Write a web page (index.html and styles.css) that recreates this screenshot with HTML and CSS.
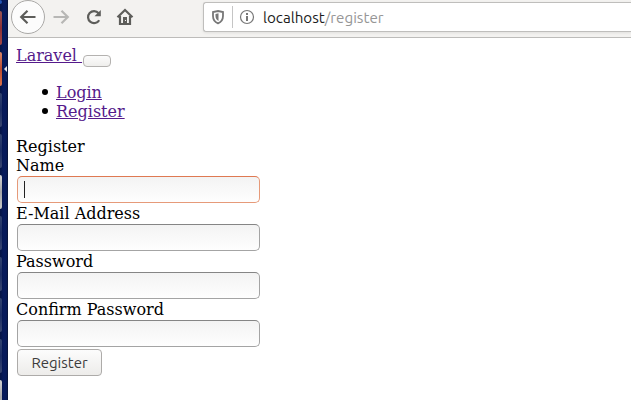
FILE: index.html
```html
<!DOCTYPE html>
<html lang="en">
<head>
<meta charset="utf-8">
<title>Laravel</title>
<link rel="stylesheet" href="styles.css">
</head>
<body>
<div class="desktop">
  <aside class="dock">
    <i class="tile blue"></i><i class="tile red"></i><i class="tile orange"></i><i class="tile"></i><i class="tile"></i><i class="tile light"></i><i class="tile"></i><i class="tile"></i><i class="tile"></i><i class="tile"></i><i class="tile light"></i>
    <span class="pointer"></span>
  </aside>
  <div class="browser">
    <header class="toolbar">
      <div class="back"><svg width="18" height="18" viewBox="0 0 18 18"><path d="M16.500 9H2.500M8.500 2.700L2.200 9l6.300 6.300"/></svg></div>
      <svg class="forward" width="18" height="18" viewBox="0 0 18 18"><path d="M1.500 9h13.500M9.500 2.700L15.800 9l-6.300 6.300"/></svg>
      <svg class="reload" width="18" height="18" viewBox="0 0 18 18"><path d="M14.200 12.200A6 6 0 1 1 13.600 5.200"/><path class="solid" d="M15.800 2v6.300H9.500z"/></svg>
      <svg class="home" width="18" height="18" viewBox="0 0 18 18"><path d="M1.500 9.300L9 2l7.500 7.300M4 8v8h10V8"/><path class="solid" d="M7 9h4v6H7z"/><path class="knob" d="M9 12h1v1H9z"/></svg>
      <div class="address">
        <svg class="shield" width="14" height="16" viewBox="0 0 14 16"><path d="M7 2L12 3v4c0 3.500-1.800 6-5 7.300C3.800 13 2 10.500 2 7V3z"/><path class="solid" d="M7.500 4.300L4.500 5V7c0 2.200 1 3.900 3 5z"/></svg>
        <span class="divider"></span>
        <svg class="info" width="16" height="16" viewBox="0 0 16 16"><circle cx="8" cy="8" r="6.500"/><path class="solid" d="M7 4h2v2H7zM7 7h2v5H7z"/></svg>
        <span class="url">localhost<span class="path">/register</span></span>
      </div>
    </header>
    <main class="page">
      <nav>
        <div class="brand"><a href="#">Laravel </a><button class="toggle" type="button" aria-label="Menu"></button></div>
        <ul><li><a href="#">Login</a></li><li><a href="#">Register</a></li></ul>
      </nav>
      <div>Register</div>
      <form>
        <label for="name">Name</label>
        <div class="field focused"><input id="name" type="text"><span class="caret"></span></div>
        <label for="email">E-Mail Address</label>
        <div class="field"><input id="email" type="email"></div>
        <label for="password">Password</label>
        <div class="field"><input id="password" type="password"></div>
        <label for="confirm">Confirm Password</label>
        <div class="field"><input id="confirm" type="password"></div>
        <button class="submit" type="button">Register</button>
      </form>
    </main>
  </div>
</div>
</body>
</html>
```
FILE: styles.css
```css
* { box-sizing: border-box; }
body { margin: 0; background: #fff; color: #000; font: 16px/19px "DejaVu Serif", serif; overflow: hidden; }
.desktop { display: flex; height: 400px; }
.dock { position: relative; flex: none; width: 8px; height: 400px; overflow: hidden; display: flex; flex-direction: column; gap: 7px; background: linear-gradient(90deg, #061545, #071a5c 45%, #071a58 80%, #061030); }
.tile { flex: none; width: 2px; height: 34px; border-radius: 0 2px 2px 0; background: linear-gradient(#33446f, #1b2d64 50%, #3a4770); }
.tile.blue { height: 4px; background: #2456b5; }
.tile.red { background: linear-gradient(#9b5653, #8b3035 50%, #a34745); }
.tile.orange { background: linear-gradient(#d98668, #b94a2f 50%, #db7048); }
.tile.light { background: linear-gradient(#d4d3d2, #a6a6a8 50%, #c9c9c6); }
.pointer { position: absolute; right: 1px; top: 66px; border: 3px solid transparent; border-left: 0; border-right-color: #e4e4e8; }
.browser { flex: 1; min-width: 0; }
.toolbar { display: flex; align-items: center; height: 38px; padding-bottom: 4px; background: #f3f2f0; border-bottom: 1px solid #bdbcba; }
.toolbar svg { flex: none; fill: none; stroke: #5d5d5a; stroke-width: 2.200; }
.toolbar svg .solid { fill: #5d5d5a; stroke: none; }
.toolbar svg .knob { fill: #f3f2f0; stroke: none; }
.back { flex: none; display: flex; align-items: center; justify-content: center; width: 34px; height: 34px; margin-left: 3px; border: 1px solid #aaa9a7; border-radius: 50%; background: #fcfcfc; }
.toolbar .forward { margin-left: 7px; stroke: #b7b7b5; }
.reload { margin-left: 15px; }
.home { margin-left: 13px; }
.address { flex: 1; min-width: 0; align-self: flex-start; display: flex; align-items: center; height: 30px; margin: 2px 0 0 69px; padding-left: 7px; background: #fff; border: 1px solid #bfbebc; border-right: 0; border-radius: 3px 0 0 3px; box-shadow: 0 1px 3px rgba(0,0,0,.08); }
.toolbar .shield { stroke: #777; stroke-width: 1.800; }
.toolbar .shield .solid, .toolbar .info .solid { fill: #777; }
.toolbar .info { stroke: #777; stroke-width: 1.200; }
.divider { width: 1px; height: 22px; margin: 0 6px 0 7px; background: #c5c5c5; }
.url { margin: 2px 0 0 8px; font: 15.200px/20px Ubuntu, "Noto Sans", sans-serif; color: #1c1c1c; }
.path { color: #969696; }
.page { padding: 8px; }
a { color: #551a8b; text-decoration: underline; }
.brand { display: flex; height: 21px; white-space: pre; }
.toggle { width: 28px; height: 12px; margin-top: 9px; margin-left: 1px; padding: 0; border: 1px solid #b4b2b0; border-radius: 4px; background: linear-gradient(#fcfcfc, #efeeec); }
ul { margin: 16px 0; padding-left: 40px; list-style: none; }
li::before { content: ""; display: inline-block; width: 6px; height: 6px; margin: 0 8px 3px -14px; border-radius: 50%; background: #000; }
label { display: block; }
.field { position: relative; height: 29px; padding: 1px; }
input { display: block; width: 243px; height: 27px; padding: 3px 6px; border: 1px solid #a4a4a4; border-top-color: #858585; border-radius: 5px; outline: 0; background: linear-gradient(#f3f3f3, #fefefe); }
.focused input { border-color: #e69a79; border-top-color: #df7952; }
.caret { position: absolute; left: 8px; top: 6px; width: 1px; height: 17px; background: #222; }
.submit { display: block; width: 85px; height: 27px; margin: 1px; padding: 0; border: 1px solid #adaba9; border-radius: 4px; background: linear-gradient(#fcfcfc, #edecea); color: #3c3c3c; font: 15px/20px Ubuntu, "Noto Sans", sans-serif; }
```
